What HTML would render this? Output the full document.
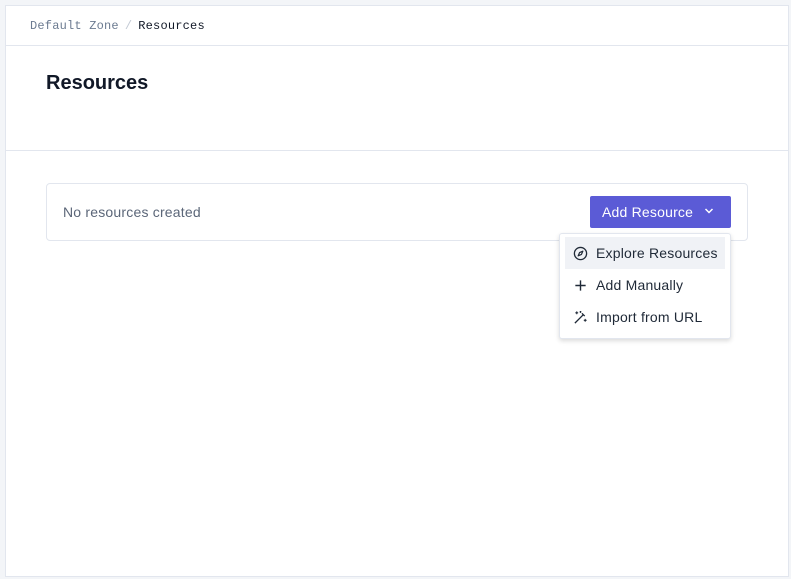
<!DOCTYPE html>
<html><head><style>
*{box-sizing:border-box;margin:0;padding:0}
body{width:791px;height:579px;background:#f3f5f8;font-family:"Liberation Sans",sans-serif;position:relative;overflow:hidden}
.frame{position:absolute;left:5px;top:5px;width:784px;height:572px;background:#fff;border:1px solid #e2e6ee}
.bc{position:absolute;left:0;top:0;right:0;height:40px;border-bottom:1px solid #e2e6ee;font-family:"Liberation Mono",monospace;font-size:12px;padding:13px 0 0 24px;color:#6b7a90;letter-spacing:0.2px}
.bc b{font-weight:normal;color:#111827}
.bc i{font-style:normal;color:#c3cad5;margin:0 6px}
h1{position:absolute;left:40px;top:66px;font-size:20px;font-weight:bold;color:#111827}
.hr{position:absolute;left:0;right:0;top:144px;border-top:1px solid #e2e6ee}
.card{position:absolute;left:40px;top:177px;width:702px;height:58px;border:1px solid #e2e6ee;border-radius:4px}
.card span{position:absolute;left:16px;top:20px;font-size:14px;color:#5b6678;letter-spacing:0.2px}
.btn{position:absolute;left:584px;top:190px;width:141px;height:32px;background:#5b5bd6;border-radius:2px;color:#fff;font-size:14px;padding:8px 0 0 12px;letter-spacing:0.2px}
.btn svg{position:absolute;left:114px;top:11px}
.menu{position:absolute;left:553px;top:227px;width:172px;height:106px;background:#fff;border:1px solid #e2e6ee;border-radius:3px;box-shadow:0 2px 5px rgba(0,0,0,.15)}
.it{position:absolute;left:5px;width:160px;height:32px;font-size:14px;color:#1f2937;padding:8px 0 0 31px;letter-spacing:0.2px}
.it svg{position:absolute;left:8px;top:9px}
</style></head><body>
<div class="frame">
<div class="bc">Default Zone<i>/</i><b>Resources</b></div>
<h1>Resources</h1>
<div class="hr"></div>
<div class="card"><span>No resources created</span></div>
<div class="btn">Add Resource<svg width="10" height="8" viewBox="0 0 10 8"><path d="M1.5 2l3.5 3.5L8.5 2" stroke="#fff" stroke-width="1.5" fill="none"/></svg></div>
<div class="menu">
<div class="it" style="top:3px;background:#f0f2f6">Explore Resources<svg width="15" height="15" viewBox="0 0 16 16"><circle cx="8" cy="8" r="6.5" stroke="#1f2937" stroke-width="1.4" fill="none"/><path d="M10.5 5.5L9 9 5.5 10.5 7 7z" stroke="#1f2937" stroke-width="1.3" fill="none" stroke-linejoin="round"/></svg></div>
<div class="it" style="top:35px">Add Manually<svg width="15" height="15" viewBox="0 0 16 16"><path d="M8 2.5v11M2.5 8h11" stroke="#1f2937" stroke-width="1.5"/></svg></div>
<div class="it" style="top:67px">Import from URL<svg width="15" height="15" viewBox="0 0 16 16"><path d="M2 14L11 5M9.5 3.5l3 3" stroke="#1f2937" stroke-width="1.4" fill="none"/><path d="M4 1.5v3M2.5 3h3M13 9.5v3M11.5 11h3M8 1v2M7 2h2" stroke="#1f2937" stroke-width="1.1"/></svg></div>
</div>
</div>
</body></html>
